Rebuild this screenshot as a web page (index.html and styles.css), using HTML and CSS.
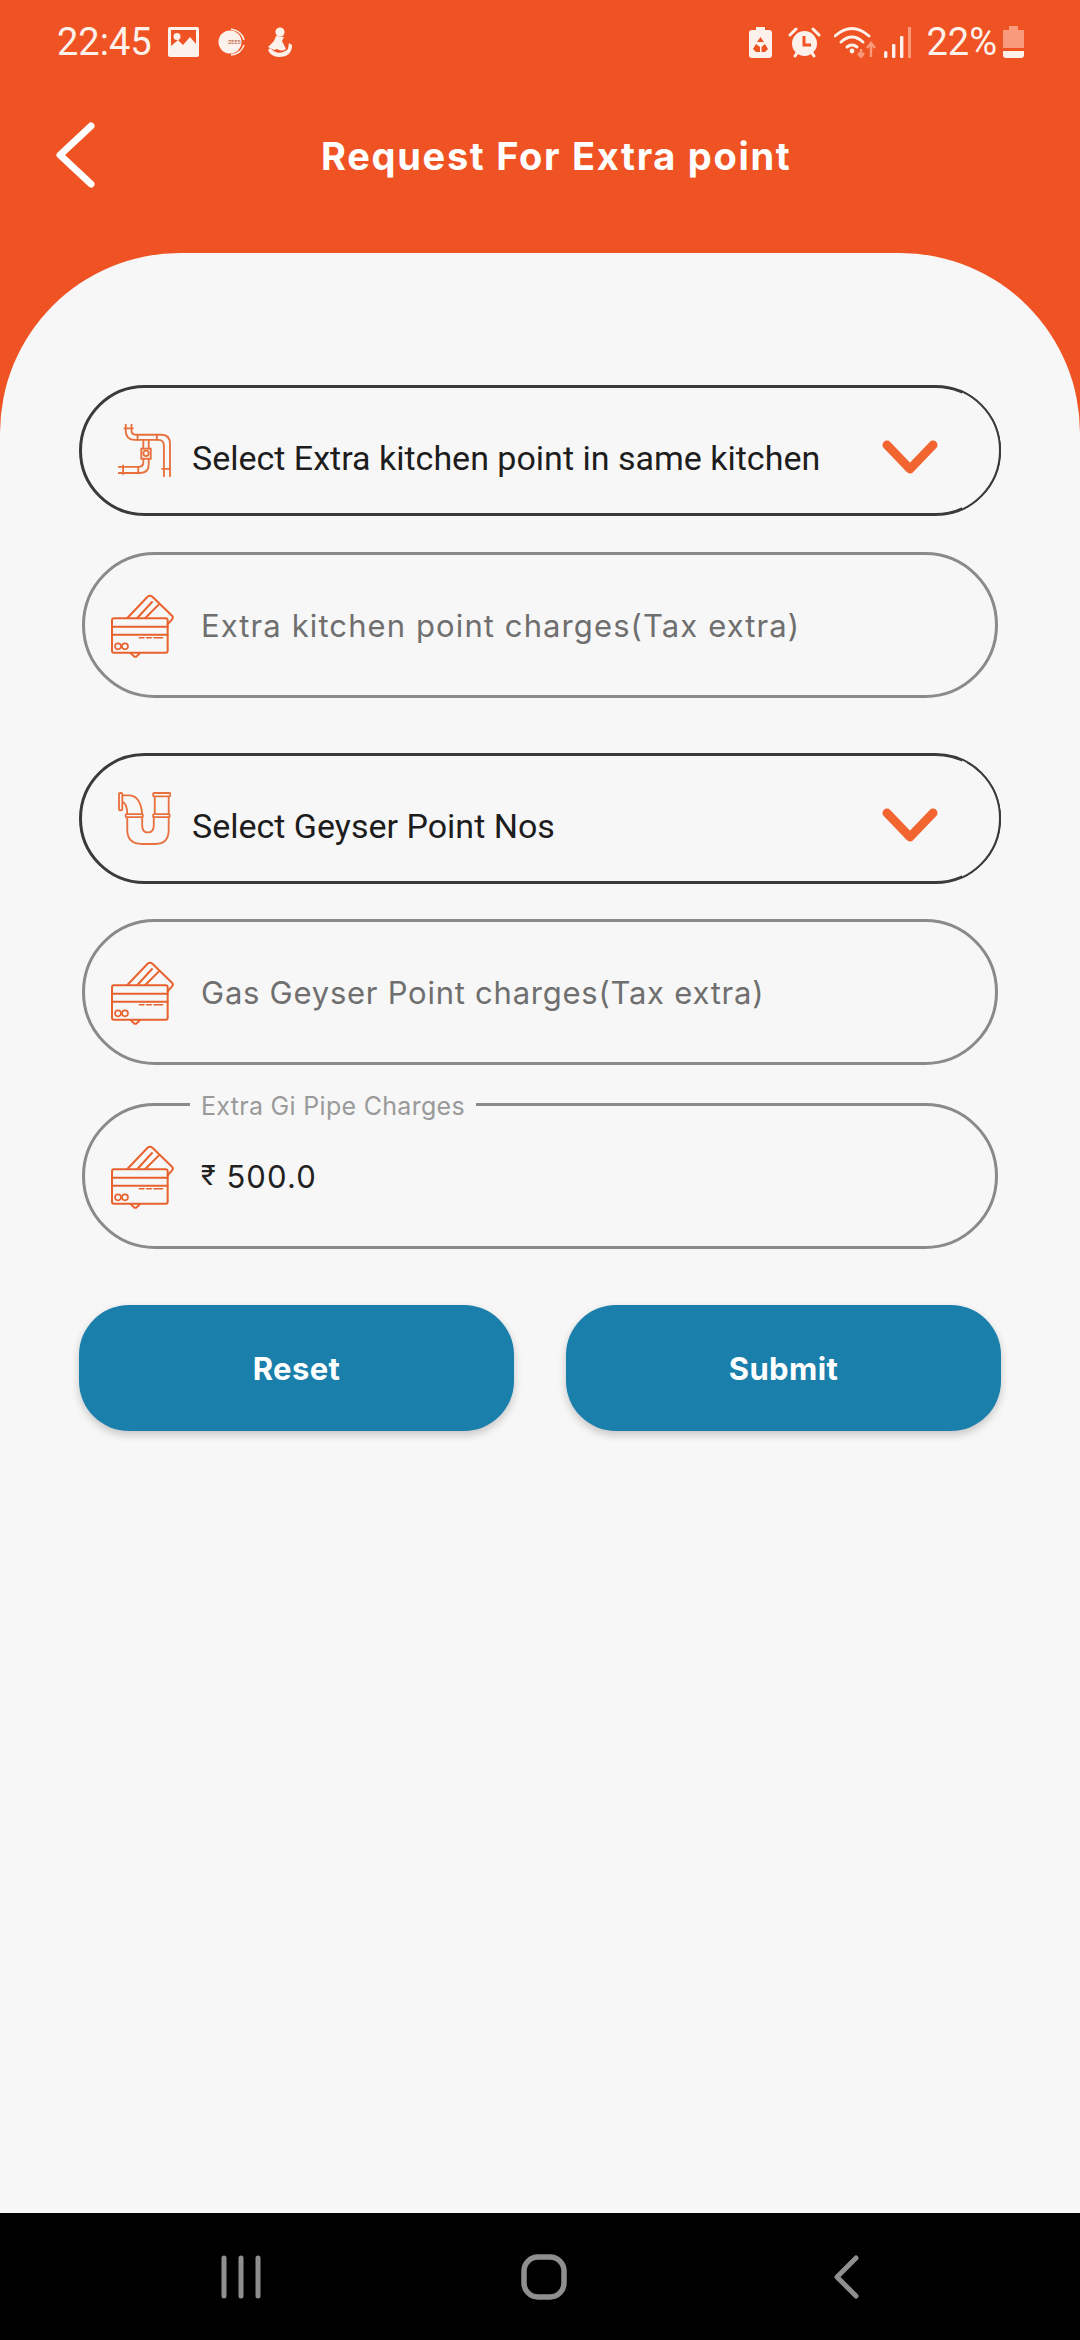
FILE: index.html
```html
<!DOCTYPE html>
<html lang="en">
<head>
<meta charset="utf-8">
<title>Request For Extra point</title>
<link rel="stylesheet" href="styles.css">
</head>
<body>
<svg class="defs" width="0" height="0" aria-hidden="true">
  <symbol id="card" viewBox="150 670 195 195">
    <g fill="none" stroke="#e8622e" stroke-width="6" stroke-linejoin="round" stroke-linecap="round">
      <rect x="156" y="746" width="167" height="103" rx="6"/>
      <path d="M156 771H323M156 795H323"/>
      <path d="M238 804H252M260 804H274M282 804H296M298 804H308" stroke-width="4.5"/>
      <circle cx="174" cy="830" r="9" stroke-width="5"/>
      <circle cx="195" cy="830" r="9" stroke-width="5"/>
      <path d="M202 745L262 682Q270 675 278 682L336 738Q341 743 336 749L323 764"/>
      <path d="M232 745L276 697M256 745L296 705"/>
      <path d="M212 850L222 860Q226 863 230 860L240 850"/>
    </g>
  </symbol>
  <symbol id="chev" viewBox="0 0 60 40">
    <path d="M7 7L30 31L53 7" fill="none" stroke="#f26430" stroke-width="9" stroke-linecap="round" stroke-linejoin="round"/>
  </symbol>
</svg>

<div class="screen">
  <header class="status">
    <span class="time">22:45</span>
    <svg class="st st-img" viewBox="0 0 31 30"><path fill="#fdf1ec" fill-rule="evenodd" d="M2 0H29Q31 0 31 2V28Q31 30 29 30H2Q0 30 0 28V2Q0 0 2 0ZM3 3V19L10 13L15 18L22 10L28 17V3ZM9 6A3.5 3.5 0 1 0 9 13A3.5 3.5 0 1 0 9 6Z"/></svg>
    <svg class="st st-zee" viewBox="0 0 28 28"><circle cx="13" cy="14" r="11.5" fill="#fdf1ec"/><path d="M14 1Q25 3 27 12M14 27Q24 26 27 17" fill="none" stroke="#fdf1ec" stroke-width="1.4"/><text x="11" y="16" font-size="5.5" font-family="Roboto" font-weight="700" fill="#c9806a">ZEE5</text></svg>
    <svg class="st st-man" viewBox="0 0 28 30"><g fill="#fdf1ec"><circle cx="15" cy="5" r="4.6"/><path d="M11 9L19 10L17 14L21 22Q17 25 12 22L9 23L3 20L9 14Z"/><path d="M3 23L5 21Q14 30 23 22L24 16L27 18Q27 30 14 30Q6 30 3 23Z"/></g></svg>
    <span class="status-gap"></span>
    <svg class="st st-bat-rec" viewBox="0 0 23 31"><path fill="#fdf1ec" fill-rule="evenodd" d="M7 0H16V3H20Q23 3 23 6V28Q23 31 20 31H3Q0 31 0 28V6Q0 3 3 3H7ZM11.5 10L8 15H15ZM7 17L4 22L7 25H11V20ZM16 17L12.5 20V25H16L19 22Z"/></svg>
    <svg class="st st-alarm" viewBox="0 0 33 31"><g fill="none" stroke="#fdf1ec" stroke-linecap="round"><path d="M2 8L8 2M31 8L25 2M7 29L9 26M26 29L24 26" stroke-width="3"/></g><circle cx="16.5" cy="16.5" r="12.5" fill="#fdf1ec"/><path d="M16 9V18H23" fill="none" stroke="#f15323" stroke-width="3"/></svg>
    <svg class="st st-wifi" viewBox="0 0 42 32"><g fill="none" stroke="#fdf1ec" stroke-width="3" stroke-linecap="round"><path d="M1 10Q18 -5 35 10"/><path d="M7 16Q18 6 29 16"/><path d="M13 21Q18 17 23 21"/></g><circle cx="18" cy="25" r="2.4" fill="#fdf1ec"/><path d="M27 31V23M24 27L27 31L30 27M37 31V18M33 22L37 17L41 22" fill="none" stroke="#f99a7c" stroke-width="2.4"/></svg>
    <svg class="st st-signal" viewBox="0 0 27 31"><rect x="0" y="24" width="3.4" height="7" rx="1.5" fill="#fdf1ec"/><rect x="8" y="17" width="3.4" height="14" rx="1" fill="#fdf1ec"/><rect x="16" y="9" width="3.4" height="22" rx="1" fill="#fdf1ec"/><rect x="24" y="0" width="3" height="31" fill="#f99a7c"/></svg>
    <span class="pct">22%</span>
    <svg class="st st-bat" viewBox="0 0 21 32"><path fill="#f99a7c" d="M6 0H15V4H21V22H0V4H6Z"/><path fill="#fdf1ec" d="M0 25H21V29Q21 32 18 32H3Q0 32 0 29Z"/></svg>
  </header>

  <div class="appbar">
    <svg class="back" viewBox="0 0 40 66"><path d="M36 4L5 33L36 62" fill="none" stroke="#fff" stroke-width="7" stroke-linecap="round" stroke-linejoin="round"/></svg>
    <h1 class="title">Request For Extra point</h1>
  </div>

  <main class="card">
    <form class="form">
      <div class="field select">
        <svg class="ico-pipe" viewBox="175 165 157 157">
          <g fill="none" stroke="#e8703c" stroke-width="5.5" stroke-linecap="round">
            <path d="M215 166V185Q215 197 230 197H305Q329 197 329 225V320"/>
            <path d="M198 166V185Q198 212 225 212H295Q311 212 311 230V320"/>
            <path d="M194 178H219M233 197V212M290 197V212M306 298H332M250 214V238M266 214V238"/>
            <rect x="244" y="238" width="28" height="30"/>
            <circle cx="258" cy="252" r="8"/>
            <path d="M250 268V280Q250 292 235 292H177"/>
            <path d="M266 268V285Q266 310 240 310H177"/>
            <path d="M190 288V313M235 292V310"/>
          </g>
        </svg>
        <span class="select-text">Select Extra kitchen point in same kitchen</span>
        <svg class="chev"><use href="#chev"/></svg>
      </div>

      <div class="field input">
        <svg class="ico-card"><use href="#card"/></svg>
        <span class="ph">Extra kitchen point charges(Tax extra)</span>
      </div>

      <div class="field select wide-gap">
        <svg class="ico-pipe" viewBox="172 155 160 160">
          <g fill="none" stroke="#e8703c" stroke-width="5.5" stroke-linejoin="round">
            <rect x="175" y="158" width="10" height="52" rx="3"/>
            <path d="M185 165H205Q240 165 245 222"/>
            <path d="M185 185Q200 190 200 222"/>
            <rect x="195" y="222" width="52" height="9" rx="3"/>
            <path d="M200 231V270Q200 312 245 312H285Q325 312 325 270V231"/>
            <path d="M245 231V255Q245 277 262 277Q280 277 280 255V231"/>
            <rect x="278" y="222" width="50" height="9" rx="3"/>
            <path d="M283 222V168M325 222V168"/>
            <rect x="278" y="158" width="52" height="10" rx="3"/>
          </g>
        </svg>
        <span class="select-text">Select Geyser Point Nos</span>
        <svg class="chev"><use href="#chev"/></svg>
      </div>

      <div class="field input input-close">
        <svg class="ico-card"><use href="#card"/></svg>
        <span class="ph ph-tight">Gas Geyser Point charges(Tax extra)</span>
      </div>

      <div class="field input input-open">
        <span class="legend">Extra Gi Pipe Charges</span>
        <svg class="ico-card"><use href="#card"/></svg>
        <span class="value"><span class="rupee">₹</span> 500.0</span>
      </div>

      <div class="actions">
        <button class="btn" type="button">Reset</button>
        <button class="btn" type="button">Submit</button>
      </div>
    </form>
  </main>

  <nav class="navbar">
    <svg class="nav-recents" viewBox="0 0 40 44"><path d="M3 3V41M20 3V41M37 3V41" stroke="#8f8f8f" stroke-width="5" stroke-linecap="round" fill="none"/></svg>
    <svg class="nav-home" viewBox="0 0 46 46"><rect x="3" y="3" width="40" height="40" rx="14" fill="none" stroke="#8f8f8f" stroke-width="5.5"/></svg>
    <svg class="nav-back" viewBox="0 0 26 44"><path d="M23 3L4 22L23 41" fill="none" stroke="#8f8f8f" stroke-width="5" stroke-linecap="round" stroke-linejoin="round"/></svg>
  </nav>
</div>
</body>
</html>
```

FILE: styles.css
```css
* { box-sizing: border-box; }
html, body { margin: 0; padding: 0; }
.defs { position: absolute; }

.screen {
  width: 1080px;
  height: 2340px;
  display: flex;
  flex-direction: column;
  background: #ef5323;
  overflow: hidden;
  font-family: Roboto, sans-serif;
}

/* status bar */
.status {
  height: 84px;
  flex: none;
  display: flex;
  align-items: center;
  padding: 0 56px 0 57px;
  color: #fdf1ec;
}
.time { font-size: 38px; font-weight: 400; margin-right: 16px; white-space: nowrap; }
.st { display: block; flex: none; }
.st-img { width: 31px; height: 30px; }
.st-zee { width: 28px; height: 28px; margin-left: 18px; }
.st-man { width: 28px; height: 30px; margin-left: 20px; }
.status-gap { flex: 1; }
.st-bat-rec { width: 23px; height: 31px; }
.st-alarm { width: 33px; height: 31px; margin-left: 16px; }
.st-wifi { width: 42px; height: 32px; margin-left: 13px; }
.st-signal { width: 27px; height: 31px; margin-left: 8px; }
.pct { font-size: 38px; font-weight: 400; margin-left: 15px; margin-right: 6px; white-space: nowrap; }
.st-bat { width: 21px; height: 32px; }

/* app bar */
.appbar {
  height: 169px;
  flex: none;
  display: flex;
  align-items: flex-start;
  padding: 38px 0 0 55px;
}
.back { width: 40px; height: 66px; flex: none; }
.title {
  margin: 12px 0 0 226px;
  font-family: Inter, sans-serif;
  font-size: 38px;
  line-height: 44px;
  font-weight: 700;
  letter-spacing: 1.7px;
  color: #fff;
  white-space: nowrap;
}

/* sheet */
.card {
  flex: 1;
  background: #f7f7f7;
  border-radius: 180px 180px 0 0;
  padding: 132px 79px 0;
}
.form { display: flex; flex-direction: column; }

.field {
  position: relative;
  display: flex;
  align-items: center;
}
.select {
  height: 131px;
  border: 3px solid #3a3a3a;
  border-radius: 66px;
  padding: 0 65px 0 36px;
}
.select::after {
  content: "";
  position: absolute;
  inset: -3px;
  border: 2px solid #3a3a3a;
  border-radius: 66px;
  background: #f7f7f7;
  clip-path: inset(0 0 0 883px);
}
.wide-gap { margin-top: 55px; }
.ico-pipe { width: 53px; height: 53px; flex: none; }
.select-text {
  margin-left: 21px;
  padding-top: 14px;
  font-size: 34px;
  color: #1d1d1d;
  white-space: nowrap;
}
.chev {
  width: 60px;
  height: 40px;
  flex: none;
  margin: 14px -7px 0 auto;
  position: relative;
  z-index: 1;
}

.input {
  height: 146px;
  margin: 36px 3px 0;
  border: 3px solid #8a8a8a;
  border-radius: 73px;
  padding: 0 30px 0 25px;
}
.input-close { margin-top: 35px; }
.input-open { margin-top: 38px; }
.ico-card { width: 65px; height: 65px; flex: none; }
.ph, .value {
  margin-left: 26px;
  font-family: Inter, sans-serif;
  font-size: 31px;
  letter-spacing: 1.1px;
  white-space: nowrap;
}
.ph { color: #6f6f6f; }
.ph-tight { letter-spacing: 0.75px; }
.value { color: #222; }
.rupee { font-family: Roboto, sans-serif; font-size: 28px; position: relative; top: -3px; }
.legend {
  position: absolute;
  left: 105px;
  top: -15px;
  padding: 0 11px;
  background: #f7f7f7;
  font-family: Inter, sans-serif;
  font-size: 25px;
  letter-spacing: 0.3px;
  line-height: 30px;
  color: #9a9a9a;
  white-space: nowrap;
}

.actions {
  display: flex;
  justify-content: space-between;
  margin-top: 56px;
}
.btn {
  width: 435px;
  height: 126px;
  border: 0;
  border-radius: 50px;
  background: #1b7fab;
  color: #fff;
  font-family: Inter, sans-serif;
  font-weight: 700;
  font-size: 31px;
  letter-spacing: 0.4px;
  box-shadow: 0 4px 8px rgba(0, 0, 0, 0.2);
}

/* nav bar */
.navbar {
  height: 127px;
  flex: none;
  background: #000;
  display: flex;
  align-items: center;
  padding-left: 221px;
}
.nav-recents { width: 40px; height: 44px; }
.nav-home { width: 46px; height: 46px; margin-left: 260px; }
.nav-back { width: 26px; height: 44px; margin-left: 266px; }
```
